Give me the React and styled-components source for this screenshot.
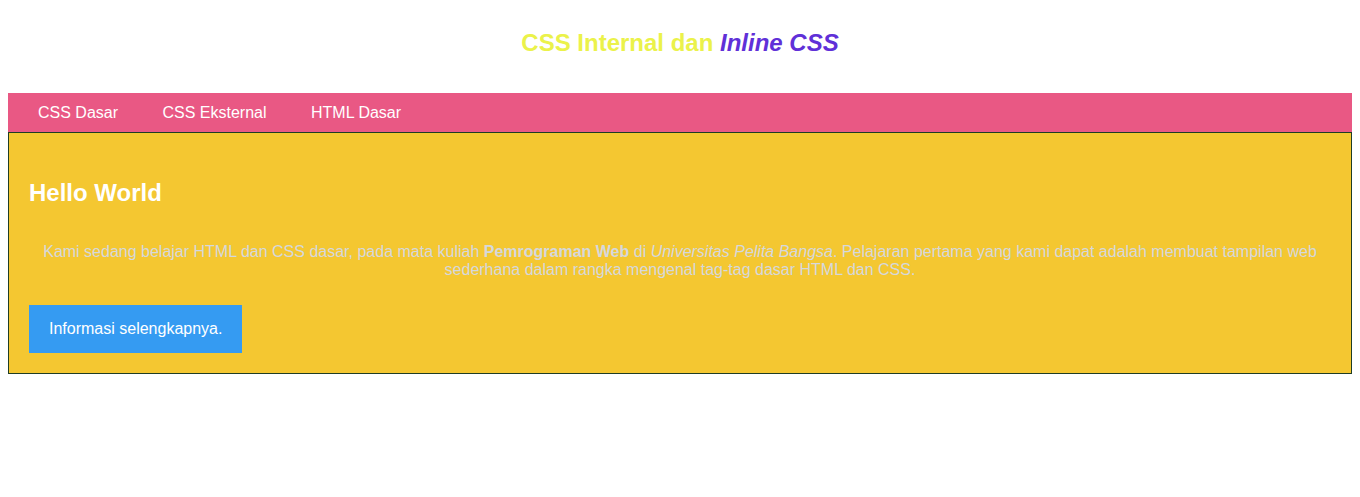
import React, { Fragment } from "react";
import styled, { createGlobalStyle } from "styled-components";

const GlobalStyle = createGlobalStyle`
  body {
    margin: 8px;
    background: #ffffff;
    font-family: "Liberation Sans", Arial, sans-serif;
    font-size: 16px;
    line-height: 18px;
  }
`;

const Header = styled.header`
  padding: 20px 20px 35px;
  text-align: center;
`;

const Title = styled.h1`
  margin: 0;
  font-size: 24px;
  line-height: 30px;
  color: #ebf24a;
`;

const TitleAccent = styled.em`
  color: #6030d8;
`;

const Nav = styled.nav`
  padding: 0 10px;
  background: #e95884;
`;

const NavLink = styled.a`
  display: inline-block;
  padding: 11px 20px 10px;
  color: #ffffff;
  text-decoration: none;
  vertical-align: top;
`;

const Intro = styled.section`
  padding: 20px;
  border: 1px solid #1f3d24;
  background: #f4c731;
`;

const IntroHeading = styled.h2`
  margin: 25px 0 35px;
  font-size: 24px;
  line-height: 30px;
  color: #ffffff;
`;

const IntroText = styled.p`
  margin: 0 0 26px;
  text-align: center;
  color: #d5d8dc;
`;

const MoreLink = styled.a`
  display: inline-block;
  padding: 15px 20px;
  background: #359bf2;
  color: #ffffff;
  text-decoration: none;
  vertical-align: top;
`;

const links = ["CSS Dasar", "CSS Eksternal", "HTML Dasar"];

export default function App() {
  return (
    <>
      <GlobalStyle />
      <Header>
        <Title>
          CSS Internal dan <TitleAccent>Inline CSS</TitleAccent>
        </Title>
      </Header>
      <Nav>
        {links.map((label) => (
          <Fragment key={label}>
            <NavLink href="#">{label}</NavLink>{" "}
          </Fragment>
        ))}
      </Nav>
      <Intro>
        <IntroHeading>Hello World</IntroHeading>
        <IntroText>
          Kami sedang belajar HTML dan CSS dasar, pada mata kuliah{" "}
          <b>Pemrograman Web</b> di <i>Universitas Pelita Bangsa</i>. Pelajaran
          pertama yang kami dapat adalah membuat tampilan web sederhana dalam
          rangka mengenal tag-tag dasar HTML dan CSS.
        </IntroText>
        <MoreLink href="#">Informasi selengkapnya.</MoreLink>
      </Intro>
    </>
  );
}
